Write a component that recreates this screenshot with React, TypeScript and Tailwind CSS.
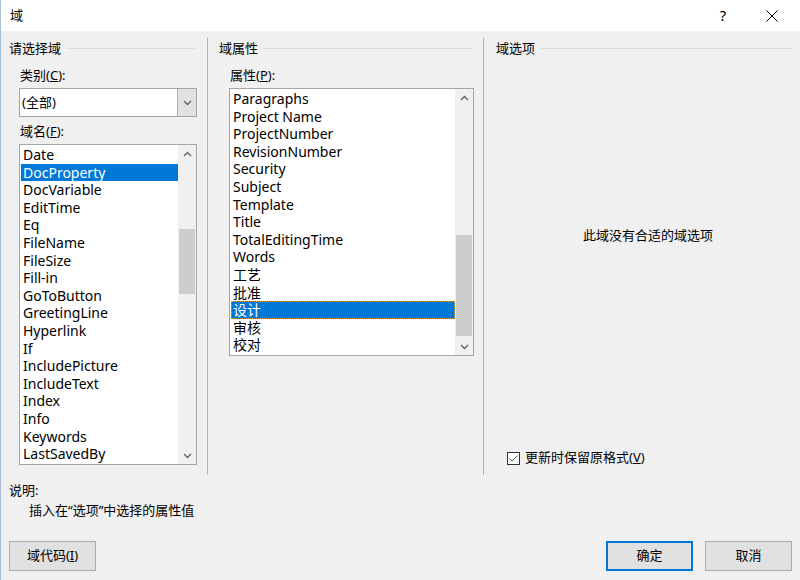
import React from "react";

const leftItems = [
  "Date",
  "DocProperty",
  "DocVariable",
  "EditTime",
  "Eq",
  "FileName",
  "FileSize",
  "Fill-in",
  "GoToButton",
  "GreetingLine",
  "Hyperlink",
  "If",
  "IncludePicture",
  "IncludeText",
  "Index",
  "Info",
  "Keywords",
  "LastSavedBy",
];

const midItems = [
  "Paragraphs",
  "Project Name",
  "ProjectNumber",
  "RevisionNumber",
  "Security",
  "Subject",
  "Template",
  "Title",
  "TotalEditingTime",
  "Words",
  "工艺",
  "批准",
  "设计",
  "审核",
  "校对",
];

function Chevron({ dir }: { dir: "up" | "down" }) {
  return (
    <svg width="9" height="6" viewBox="0 0 9 6">
      <polyline
        points={dir === "up" ? "1,5 4.5,1.5 8,5" : "1,1 4.5,4.5 8,1"}
        fill="none"
        stroke="#606060"
        strokeWidth="1.3"
      />
    </svg>
  );
}

function ListBox({
  items,
  selected,
  focus,
  boxClass,
  spacerClass,
  thumbClass,
}: {
  items: string[];
  selected: string;
  focus: boolean;
  boxClass: string;
  spacerClass: string;
  thumbClass: string;
}) {
  return (
    <div className={`flex bg-white border border-[#a5a5a5] text-[14px] ${boxClass}`}>
      <div className="flex-1 flex flex-col pt-px pl-px overflow-hidden">
        {items.map((it) => {
          const sel = it === selected;
          return (
            <div
              key={it}
              className={`h-[17.6px] leading-[17.6px] shrink-0 px-[2px] whitespace-nowrap ${
                sel ? "bg-[#0078d7] text-white" : ""
              } ${sel && focus ? "outline-1 outline-dotted outline-[#e0a040] -outline-offset-1" : ""}`}
            >
              {it}
            </div>
          );
        })}
      </div>
      <div className="w-[18px] bg-[#f0f0f0] flex flex-col shrink-0">
        <div className="h-[17px] flex items-center justify-center">
          <Chevron dir="up" />
        </div>
        <div className="flex-1 flex flex-col">
          <div className={spacerClass} />
          <div className={`bg-[#cdcdcd] mx-px ${thumbClass}`} />
        </div>
        <div className="h-[17px] flex items-center justify-center">
          <Chevron dir="down" />
        </div>
      </div>
    </div>
  );
}

function GroupHeader({ title, lineClass }: { title: string; lineClass: string }) {
  return (
    <div className="h-[20px] flex items-center">
      <span className="leading-[20px]">{title}</span>
      <div className={`flex-1 h-px bg-[#dcdcdc] ${lineClass}`} />
    </div>
  );
}

export default function App() {
  return (
    <div className="w-[800px] h-[580px] bg-[#f0f0f0] flex flex-col border-l border-[#a9bdd6] text-[13px] text-black [font-family:Noto_Sans,Noto_Sans_CJK_SC,sans-serif] overflow-hidden">
      {/* title bar */}
      <div className="h-[31px] bg-white flex items-center shrink-0">
        <span className="pl-[9px]">域</span>
        <div className="ml-auto flex items-center gap-[3px] pr-[5px]">
          <div className="w-[46px] h-[31px] flex items-center justify-center text-[15px]">?</div>
          <div className="w-[46px] h-[31px] flex items-center justify-center">
            <svg width="12" height="12" viewBox="0 0 12 12">
              <line x1="0.5" y1="0.5" x2="11.5" y2="11.5" stroke="#000" strokeWidth="1" />
              <line x1="11.5" y1="0.5" x2="0.5" y2="11.5" stroke="#000" strokeWidth="1" />
            </svg>
          </div>
        </div>
      </div>

      {/* body */}
      <div className="h-[444px] flex pt-[7px] shrink-0">
        {/* left column */}
        <div className="w-[206px] pl-[8px] flex flex-col shrink-0">
          <GroupHeader title="请选择域" lineClass="ml-[6px] mr-[12px]" />
          <div className="mt-[8px] h-[18px] leading-[18px] pl-[11px]">
            类别(<span className="underline">C</span>):
          </div>
          <div className="mt-[4px] ml-[10px] w-[178px] h-[29px] flex border border-[#a5a5a5] bg-white">
            <div className="flex-1 pl-[2px] flex items-center">(全部)</div>
            <div className="w-[19px] bg-[#e1e1e1] border-l border-[#adadad] flex items-center justify-center">
              <Chevron dir="down" />
            </div>
          </div>
          <div className="mt-[5px] h-[18px] leading-[18px] pl-[11px]">
            域名(<span className="underline">F</span>):
          </div>
          <div className="mt-[4px] ml-[10px]">
            <ListBox
              items={leftItems}
              selected="DocProperty"
              focus={false}
              boxClass="w-[178px] h-[321px]"
              spacerClass="h-[67px]"
              thumbClass="h-[65px]"
            />
          </div>
        </div>

        {/* middle column */}
        <div className="w-[276px] border-l border-[#b4b4b4] pl-[11px] flex flex-col shrink-0">
          <GroupHeader title="域属性" lineClass="ml-[5px] mr-[10px]" />
          <div className="mt-[8px] h-[18px] leading-[18px] pl-[11px]">
            属性(<span className="underline">P</span>):
          </div>
          <div className="mt-[4px] ml-[10px]">
            <ListBox
              items={midItems}
              selected="设计"
              focus={true}
              boxClass="w-[245px] h-[268px]"
              spacerClass="h-[129px]"
              thumbClass="h-[101px]"
            />
          </div>
        </div>

        {/* right column */}
        <div className="flex-1 border-l border-[#b4b4b4] pl-[12px] flex flex-col">
          <GroupHeader title="域选项" lineClass="ml-[5px] mr-[8px]" />
          <div className="mt-[167px] h-[20px] leading-[20px] text-center">此域没有合适的域选项</div>
          <div className="mt-[203px] h-[20px] pl-[11px] flex items-center gap-[5px]">
            <div className="w-[13px] h-[13px] border border-[#333333] bg-white flex items-center justify-center">
              <svg width="11" height="11" viewBox="0 0 11 11">
                <polyline points="1.5,5.5 4,8 9.5,2.5" fill="none" stroke="#555" strokeWidth="1" />
              </svg>
            </div>
            <span>
              更新时保留原格式(<span className="underline">V</span>)
            </span>
          </div>
        </div>
      </div>

      {/* bottom */}
      <div className="flex-1 flex flex-col pl-[8px] pr-[8px]">
        <div className="mt-[5px] h-[20px] leading-[20px]">说明:</div>
        <div className="h-[20px] leading-[20px] pl-[20px]">插入在“选项”中选择的属性值</div>
        <div className="mt-[21px] flex items-center">
          <button className="w-[87px] h-[30px] bg-[#e1e1e1] border border-[#adadad] flex items-center justify-center">
            域代码(<span className="underline">I</span>)
          </button>
          <button className="ml-auto w-[87px] h-[30px] bg-[#e1e1e1] border-2 border-[#0078d7] flex items-center justify-center">
            确定
          </button>
          <button className="ml-[12px] w-[87px] h-[30px] bg-[#e1e1e1] border border-[#adadad] flex items-center justify-center">
            取消
          </button>
        </div>
      </div>
    </div>
  );
}
